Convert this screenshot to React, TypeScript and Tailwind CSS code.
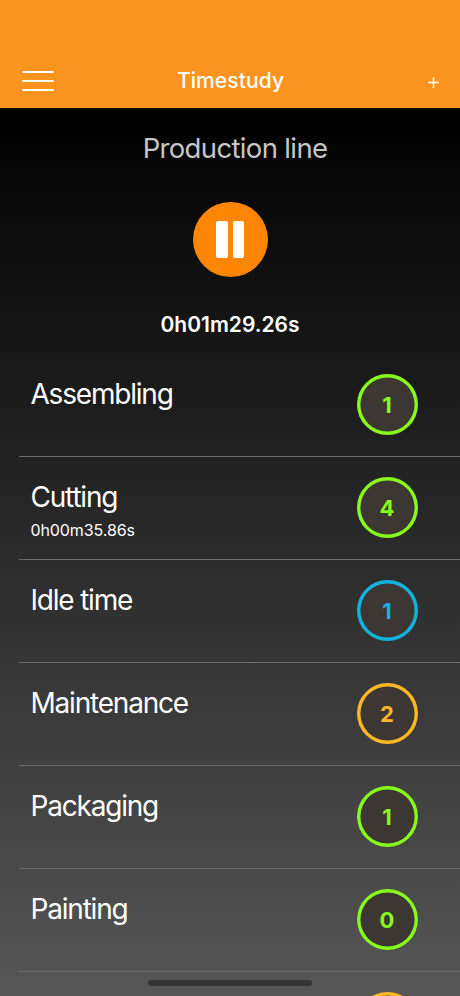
import clsx from "clsx";

type Tone = "green" | "blue" | "amber";

interface Activity {
  name: string;
  count: number;
  tone: Tone;
  elapsed?: string;
}

const activities: Activity[] = [
  { name: "Assembling", count: 1, tone: "green" },
  { name: "Cutting", count: 4, tone: "green", elapsed: "0h00m35.86s" },
  { name: "Idle time", count: 1, tone: "blue" },
  { name: "Maintenance", count: 2, tone: "amber" },
  { name: "Packaging", count: 1, tone: "green" },
  { name: "Painting", count: 0, tone: "green" },
];

const toneClass: Record<Tone, string> = {
  green: "text-[#86fa1c]",
  blue: "text-[#12b4df]",
  amber: "text-[#fdb827]",
};

function Header() {
  return (
    <header className="h-[108px] shrink-0 bg-[#f99420] pt-[54px]">
      <div className="grid h-[54px] grid-cols-[1fr_auto_1fr] items-center pl-[22px] pr-[21px] text-white">
        <button className="flex w-8 flex-col gap-[7px]" aria-label="Menu">
          <span className="h-[2px] w-full rounded-[1px] bg-white" />
          <span className="h-[2px] w-full rounded-[1px] bg-white" />
          <span className="h-[2px] w-full rounded-[1px] bg-white" />
        </button>
        <h1 className="pb-px text-[21px] font-medium leading-none tracking-[0.1px]">Timestudy</h1>
        <button className="flex justify-end pt-[3px]" aria-label="Add">
          <svg width="11" height="11" viewBox="0 0 11 11" stroke="white" strokeWidth="1.5">
            <path d="M5.5 0.3v10.4M0.3 5.5h10.4" />
          </svg>
        </button>
      </div>
    </header>
  );
}

function Timer() {
  return (
    <section className="flex h-[246px] shrink-0 flex-col items-center">
      <h2 className="mt-[23px] pl-[10px] text-[27.5px] font-normal leading-[34px] tracking-[-0.65px] text-[#c6c6c6]">
        Production line
      </h2>
      <button
        className="mt-[37px] flex size-[75px] items-center justify-center gap-[5px] rounded-full bg-[#ff8604]"
        aria-label="Pause"
      >
        <span className="h-[37px] w-[11.5px] rounded-[2px] bg-white" />
        <span className="h-[37px] w-[11.5px] rounded-[2px] bg-white" />
      </button>
      <p className="mt-[34px] text-[21px] font-semibold leading-[28px] text-white">0h01m29.26s</p>
    </section>
  );
}

function CountBadge({ count, tone }: { count?: number; tone: Tone }) {
  return (
    <div
      className={clsx(
        "mr-[42px] flex size-[61px] shrink-0 items-center justify-center rounded-full bg-[#3c3732] pr-px pt-px text-[22px] font-bold leading-none shadow-[inset_0_0_0_3.4px_currentColor]",
        toneClass[tone],
      )}
    >
      {count}
    </div>
  );
}

function ActivityRow({ activity }: { activity: Activity }) {
  return (
    <li className="ml-[19px] flex h-[103px] shrink-0 items-start justify-between border-b border-[#6b6b6b] pt-5">
      <div className="pl-[11.5px] text-white">
        <p className="pt-px text-[28px] leading-[38px] tracking-[-1.2px]">{activity.name}</p>
        {activity.elapsed && (
          <p className="mt-[3px] text-[16px] leading-[22px] tracking-[-0.1px]">{activity.elapsed}</p>
        )}
      </div>
      <CountBadge count={activity.count} tone={activity.tone} />
    </li>
  );
}

export default function App() {
  return (
    <div className="relative flex h-[996px] w-[460px] flex-col overflow-hidden bg-black font-['Inter',sans-serif]">
      <Header />
      <main className="flex min-h-0 flex-1 flex-col overflow-hidden bg-[linear-gradient(to_bottom,#000,#565656)]">
        <Timer />
        <ul className="flex flex-col">
          {activities.map((activity) => (
            <ActivityRow key={activity.name} activity={activity} />
          ))}
          {/* next row, cut off by the screen edge */}
          <li className="flex shrink-0 justify-end pt-5">
            <CountBadge tone="amber" />
          </li>
        </ul>
      </main>
      {/* home indicator */}
      <div className="absolute bottom-[10px] left-[148px] h-[6px] w-[164px] rounded-full bg-[#343434]" />
    </div>
  );
}
